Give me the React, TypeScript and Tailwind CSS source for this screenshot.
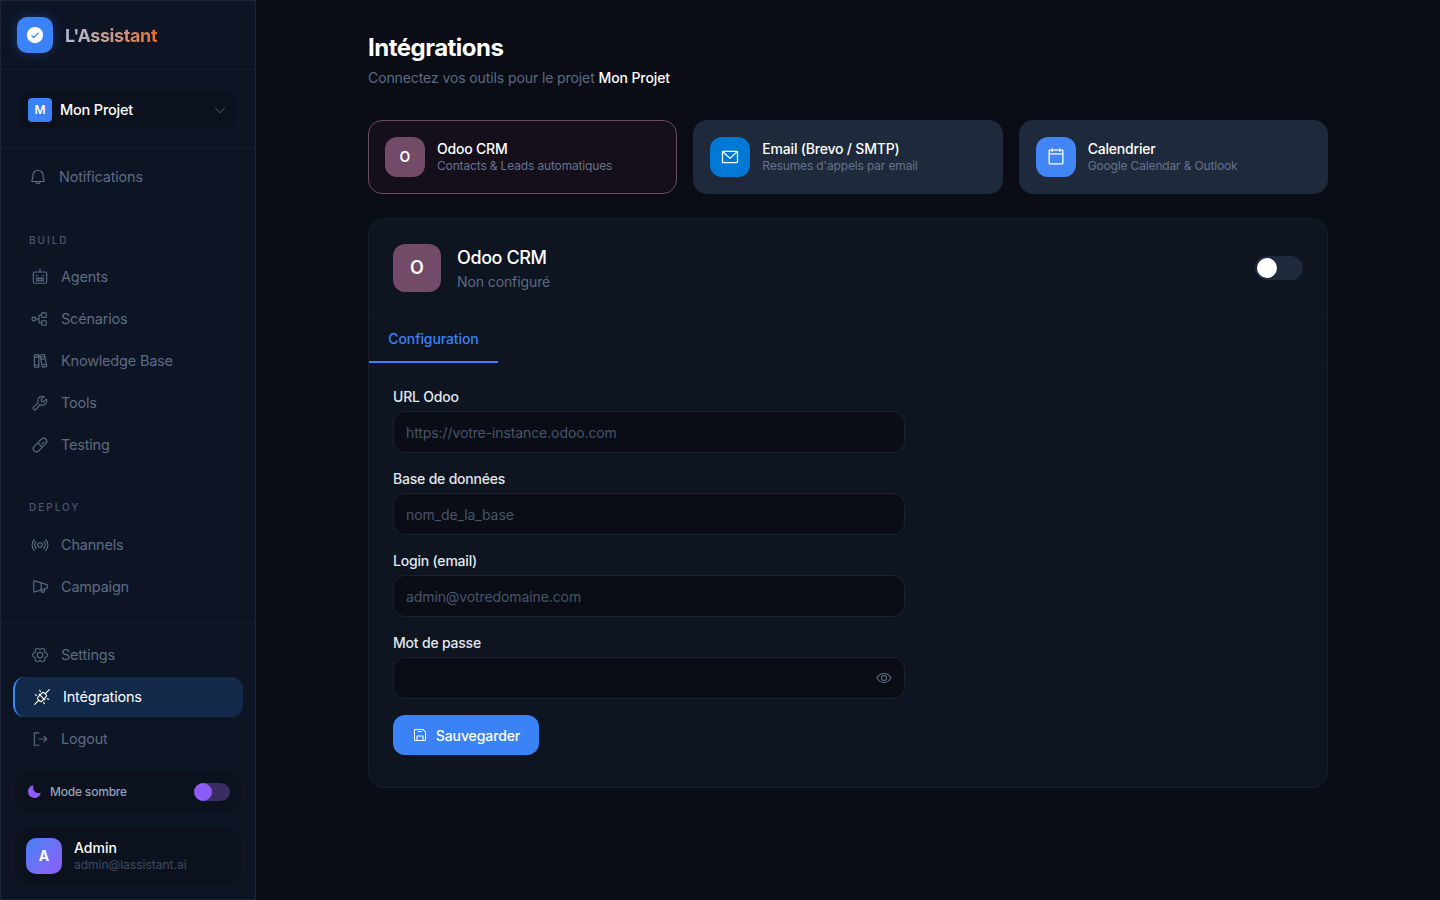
import React from "react";
import {
  PiBell, PiRobot, PiTreeStructure, PiBooks, PiWrench, PiPill, PiBroadcast, PiMegaphoneSimple,
  PiGearSix, PiPlugsConnected, PiSignOut, PiMoonFill, PiEye, PiFloppyDisk, PiCalendarBlank,
  PiEnvelopeSimple, PiCheckCircleFill, PiCaretDown,
} from "react-icons/pi";

const Row = ({ icon: I, label, active }: { icon: any; label: string; active?: boolean }) => (
  <div className={`flex items-center h-10 mx-[12px] pl-[18px] gap-[12px] rounded-xl text-[14.5px] tracking-[-0.2px] ${active ? "bg-[#13294a] text-white border-l-2 border-[#3b82f6] pl-[16px]" : "text-[#5d6b82]"}`}>
    <I className="w-[18px] h-[18px] shrink-0" />
    <span>{label}</span>
  </div>
);

const Section = ({ label }: { label: string }) => (
  <div className="h-4 ml-[28px] text-[10px] leading-4 tracking-[2px] font-medium text-[#4b586e]">{label}</div>
);

const Card = ({ icon, color, title, sub, active }: { icon: React.ReactNode; color: string; title: string; sub: string; active?: boolean }) => (
  <div className={`h-[74px] rounded-[14px] border flex items-center px-4 gap-3 ${active ? "bg-[#150f1b] border-[#6b4a66]" : "bg-[#1e293b] border-[#1e293b]"}`}>
    <div className={`w-10 h-10 rounded-xl flex items-center justify-center text-white text-sm font-semibold ${color}`}>{icon}</div>
    <div>
      <div className="text-[14px] leading-[18px] font-medium text-white tracking-[-0.2px]">{title}</div>
      <div className="text-[12px] leading-4 text-[#64748b] tracking-[-0.15px]">{sub}</div>
    </div>
  </div>
);

const Field = ({ label, placeholder, eye }: { label: string; placeholder?: string; eye?: boolean }) => (
  <div className="h-[70px] mb-3">
    <div className="h-5 text-[14px] leading-5 font-medium text-[#e2e8f0] tracking-[-0.2px] mb-[4px]">{label}</div>
    <div className="w-[512px] h-[42px] rounded-xl border border-[#1a2232] bg-[#0a0d16] px-3 flex items-center justify-between text-[14px] text-[#475569] tracking-[-0.1px]">
      <span>{placeholder}</span>
      {eye && <PiEye className="w-4 h-4 text-[#64748b]" />}
    </div>
  </div>
);

export default function App() {
  return (
    <div className="flex h-[900px] w-[1440px] overflow-hidden bg-[#0a0d16] font-['Inter','Liberation_Sans',sans-serif]">
      <aside className="w-[256px] shrink-0 h-full flex flex-col bg-[#0d1424] border border-[#1a2438]">
        <div className="h-[69px] shrink-0 flex items-center pl-4 gap-3 border-b border-[#141c2e]">
          <div className="w-9 h-9 rounded-[10px] bg-[#3b82f6] flex items-center justify-center shadow-[0_0_12px_rgba(59,130,246,0.3)]">
            <PiCheckCircleFill className="w-5 h-5 text-white" />
          </div>
          <span className="text-[18px] font-bold tracking-[-0.4px] bg-gradient-to-r from-[#a9bbdb] to-[#e56f22] bg-clip-text text-transparent">L'Assistant</span>
        </div>
        <div className="h-[79px] shrink-0 pt-[18px] px-[17px] border-b border-[#141c2e]">
          <div className="h-[43px] rounded-xl bg-[#0c111e] border border-[#10172a] flex items-center pl-[9px] pr-[10px]">
            <div className="w-6 h-6 rounded bg-[#3b82f6] text-white text-[12px] font-semibold flex items-center justify-center">M</div>
            <span className="ml-2 text-[14.5px] font-medium text-white tracking-[-0.2px]">Mon Projet</span>
            <PiCaretDown className="ml-auto w-3.5 h-3.5 text-[#475569]" />
          </div>
        </div>
        <div className="pt-2 -ml-[2px]"><Row icon={PiBell} label="Notifications" /></div>
        <div className="mt-[35px] mb-[9px]"><Section label="BUILD" /></div>
        <div className="flex flex-col gap-[2px]">
          <Row icon={PiRobot} label="Agents" />
          <Row icon={PiTreeStructure} label="Scénarios" />
          <Row icon={PiBooks} label="Knowledge Base" />
          <Row icon={PiWrench} label="Tools" />
          <Row icon={PiPill} label="Testing" />
        </div>
        <div className="mt-[34px] mb-[10px]"><Section label="DEPLOY" /></div>
        <div className="flex flex-col gap-[2px]">
          <Row icon={PiBroadcast} label="Channels" />
          <Row icon={PiMegaphoneSimple} label="Campaign" />
        </div>
        <div className="mt-[15px] pt-3 border-t border-[#141c2e] flex flex-col gap-[2px]">
          <Row icon={PiGearSix} label="Settings" />
          <Row icon={PiPlugsConnected} label="Intégrations" active />
          <Row icon={PiSignOut} label="Logout" />
        </div>
        <div className="mx-3 mt-3 h-[42px] rounded-xl bg-[#0c111e] border border-[#10172a] flex items-center pl-3 pr-3">
          <PiMoonFill className="w-4 h-4 text-[#8b5cf6]" />
          <span className="ml-[8px] text-[12px] font-medium text-[#94a3b8] tracking-[-0.2px]">Mode sombre</span>
          <div className="ml-auto w-9 h-[18px] rounded-full bg-[#3a2d63] flex items-center">
            <div className="w-[18px] h-[18px] rounded-full bg-[#8b5cf6]" />
          </div>
        </div>
        <div className="mx-3 mt-[14px] h-[58px] rounded-xl bg-[#0c111e] border border-[#10172a] flex items-center pl-3 gap-3">
          <div className="w-9 h-9 rounded-[10px] bg-gradient-to-br from-[#3b82f6] to-[#8b5cf6] text-white text-sm font-bold flex items-center justify-center">A</div>
          <div>
            <div className="text-[14px] leading-[18px] font-medium text-white">Admin</div>
            <div className="text-[12px] leading-4 text-[#3f4b60]">admin@lassistant.ai</div>
          </div>
        </div>
      </aside>
      <main className="flex-1 min-w-0">
        <div className="w-[960px] mx-auto pt-[32px]">
          <h1 className="text-[24px] leading-8 font-bold text-white tracking-[-0.5px]">Intégrations</h1>
          <p className="mt-[2px] text-[14px] leading-6 text-[#5d6b82] tracking-[-0.1px]">Connectez vos outils pour le projet <span className="font-medium text-white">Mon Projet</span></p>
          <div className="mt-[30px] grid grid-cols-3 gap-4">
            <Card active color="bg-[#714b67]" icon="O" title="Odoo CRM" sub="Contacts & Leads automatiques" />
            <Card color="bg-[#0078d4]" icon={<PiEnvelopeSimple className="w-5 h-5" />} title="Email (Brevo / SMTP)" sub="Resumes d'appels par email" />
            <Card color="bg-[#4285f4]" icon={<PiCalendarBlank className="w-5 h-5" />} title="Calendrier" sub="Google Calendar & Outlook" />
          </div>
          <section className="mt-6 h-[570px] rounded-2xl bg-[#0e1420] border border-[#161e2c]">
            <div className="h-[98px] flex items-center pl-6 pr-6 gap-4 border-b border-[#131a27]">
              <div className="w-12 h-12 rounded-xl bg-[#714b67] text-white text-lg font-semibold flex items-center justify-center">O</div>
              <div>
                <div className="text-[18px] leading-7 font-medium text-white tracking-[-0.4px]">Odoo CRM</div>
                <div className="text-[14px] leading-5 text-[#5d6b82] tracking-[-0.1px]">Non configuré</div>
              </div>
              <div className="ml-auto w-12 h-6 rounded-full bg-[#1e293b] flex items-center pl-[2px]">
                <div className="w-5 h-5 rounded-full bg-white" />
              </div>
            </div>
            <div className="h-[46px] border-b border-[#131a27]">
              <div className="w-[129px] h-[46px] text-[14px] leading-[44px] text-center font-medium text-[#3b82f6] border-b-2 border-[#3b82f6] tracking-[-0.1px]">Configuration</div>
            </div>
            <div className="pt-6 px-6">
              <Field label="URL Odoo" placeholder="https://votre-instance.odoo.com" />
              <Field label="Base de données" placeholder="nom_de_la_base" />
              <Field label="Login (email)" placeholder="admin@votredomaine.com" />
              <Field label="Mot de passe" eye />
              <button className="mt-[12px] w-[146px] h-10 rounded-xl bg-[#3b82f6] text-white text-[14px] font-medium flex items-center justify-center gap-2 tracking-[-0.1px]">
                <PiFloppyDisk className="w-4 h-4" />
                Sauvegarder
              </button>
            </div>
          </section>
        </div>
      </main>
    </div>
  );
}
